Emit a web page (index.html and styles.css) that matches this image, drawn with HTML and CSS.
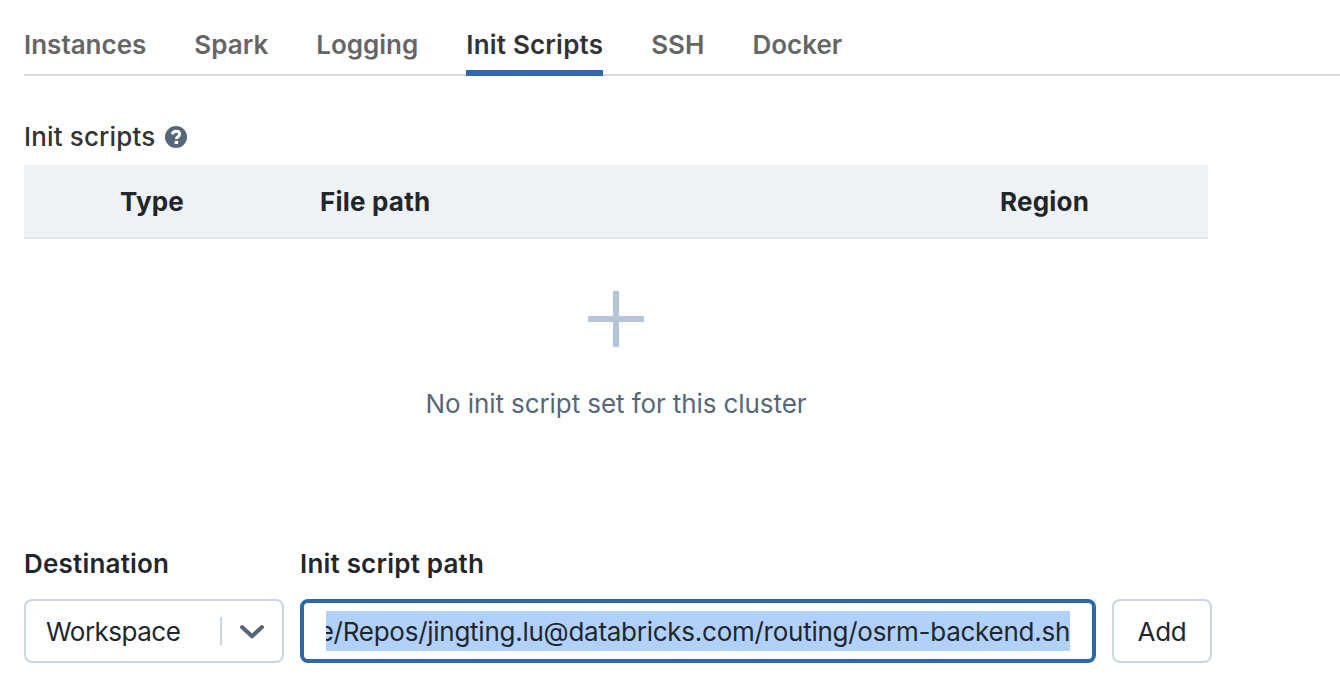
FILE: index.html
```html
<!DOCTYPE html>
<html lang="en">
<head>
<meta charset="utf-8">
<title>Init Scripts</title>
<link rel="stylesheet" href="styles.css">
</head>
<body>
<nav class="tabs">
<a class="tab">Instances</a><a class="tab">Spark</a><a class="tab">Logging</a><a class="tab active">Init Scripts</a><a class="tab">SSH</a><a class="tab">Docker</a>
</nav>
<main>
<h2 class="title"><span class="title-text">Init scripts</span>
<svg class="help" viewBox="0 0 22 22"><circle cx="11" cy="11" r="11" fill="#566778"/><path d="M7.3 8.4C7.9 6.2 9.3 5.3 11 5.3c2.1 0 3.6 1.1 3.6 2.9 0 2.5-3.2 2.5-3.2 4.9" fill="none" stroke="#fff" stroke-width="3"/><rect x="9.6" y="14.8" width="3.6" height="3.2" rx=".6" fill="#fff"/></svg></h2>
<div class="thead"><span>Type</span><span>File path</span><span>Region</span></div>
<div class="empty"><svg class="plus" viewBox="0 0 56 56"><path d="M28 0v56M0 28h56" stroke="#b5c5d5" stroke-width="6"/></svg>
<p class="empty-text">No init script set for this cluster</p></div>
<form class="form">
<div class="field"><label>Destination</label><div class="select"><span class="value">Workspace</span><i class="divider"></i><svg class="chev" viewBox="0 0 24 14"><path d="M2.2 2.2L12 11.2 21.8 2.2" fill="none" stroke="#566778" stroke-width="4.2" stroke-linecap="round" stroke-linejoin="round"/></svg></div></div>
<div class="field"><label>Init script path</label><div class="input"><div class="clip"><span class="sel">e/Repos/jingting.lu@databricks.com/routing/osrm-backend.sh</span></div></div></div>
<button class="add" type="button">Add</button>
</form>
</main>
</body>
</html>
```
FILE: styles.css
```css
* { box-sizing: border-box; }
body { margin: 0; background: #fff; color: #1f272d; font: 26px/32px Inter, sans-serif; overflow: hidden; }
.tabs { height: 76px; margin-left: 24px; padding-top: 29px; display: flex; gap: 48px; border-bottom: 2px solid #d8d8d8; white-space: nowrap; }
.tab { height: 47px; color: #666; font-weight: 600; letter-spacing: 0; }
.tab.active { color: #333; border-bottom: 6px solid #2f68b0; letter-spacing: 0.2px; }
main { padding: 45px 0 0 24px; }
.title { margin: 0; display: flex; align-items: center; gap: 10px; color: #333; font-size: 26px; font-weight: 500; }
.title-text { letter-spacing: 0.14px; }
.help { width: 22px; height: 22px; }
.thead { width: 1184px; height: 74px; margin-top: 12px; padding: 2px 0 0 96px; display: grid; grid-template-columns: 200px 680px auto; align-items: center; background: #eef2f5; border-bottom: 2px solid #dfe6ec; font-weight: 700; letter-spacing: 0.2px; }
.empty { width: 1184px; height: 308px; padding-top: 52px; display: flex; flex-direction: column; align-items: center; color: #566778; }
.plus { width: 56px; height: 56px; }
.empty-text { margin: 41px 0 0; letter-spacing: -0.09px; }
.form { display: flex; align-items: flex-end; gap: 16px; height: 116px; }
.field { display: flex; flex-direction: column; gap: 19px; }
label { font-weight: 600; letter-spacing: 0.2px; }
.select, .input, .add { height: 64px; border: 2px solid #cbd5e1; border-radius: 8px; background: #fff; }
.select { width: 260px; padding: 0 18px 0 20px; display: flex; align-items: center; }
.value { padding-top: 2px; letter-spacing: -0.5px; }
.divider { width: 2px; height: 28px; margin-left: auto; background: #cbd5e1; }
.chev { width: 24px; height: 14px; margin: 2px 0 0 18px; }
.input { width: 796px; padding: 8px 22px; border: 4px solid #2f68a9; }
.clip { height: 40px; overflow: hidden; display: flex; justify-content: flex-end; background: #b2d1fa; line-height: 42px; white-space: nowrap; letter-spacing: -0.26px; }
.add { width: 100px; padding: 2px 0 0; color: inherit; font: inherit; letter-spacing: -0.3px; }
```
